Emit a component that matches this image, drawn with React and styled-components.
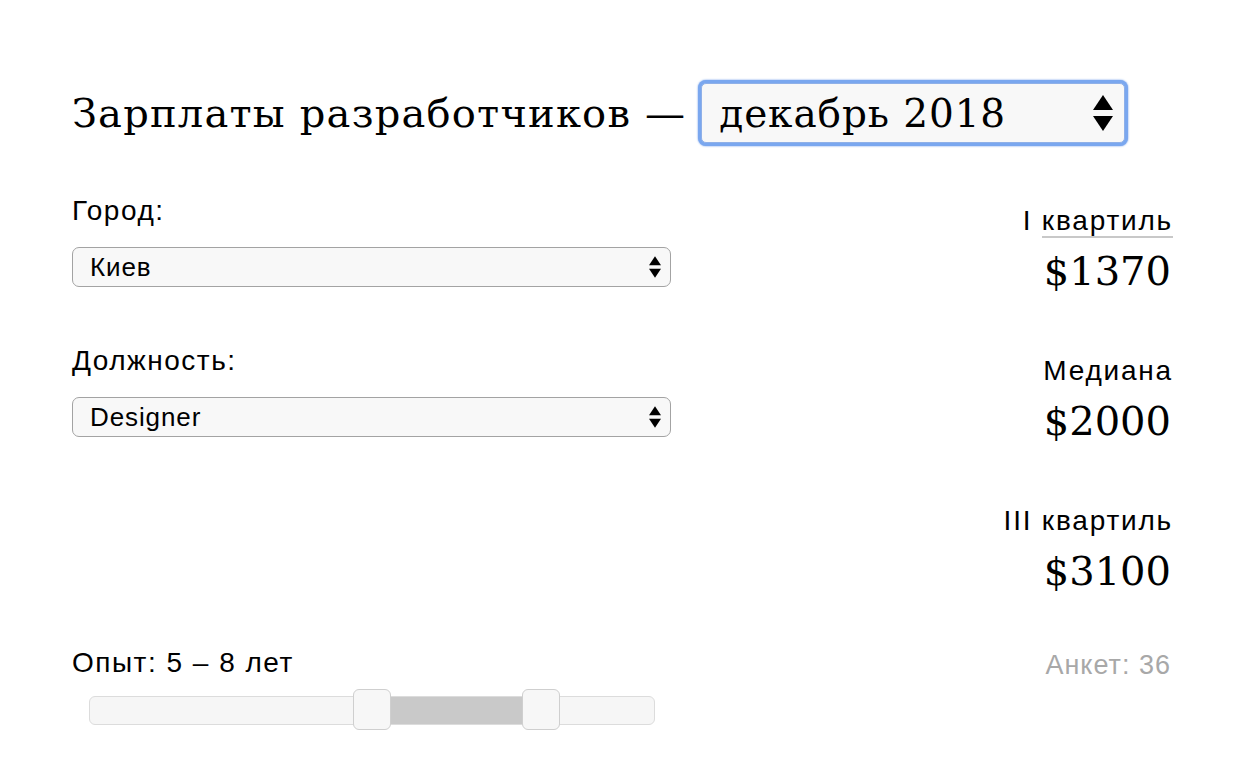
import React from "react";
import styled, { createGlobalStyle } from "styled-components";

const GlobalStyle = createGlobalStyle`
    html, body {
        margin: 0;
        padding: 0;
        background: #fff;
    }
    body {
        font-family: "Liberation Sans", Arial, sans-serif;
        color: #000;
    }
`;

const SERIF = `"DejaVu Serif", "Liberation Serif", Georgia, serif`;
const SANS = `"Liberation Sans", Arial, sans-serif`;

const Page = styled.div`
    width: 1234px;
    height: 774px;
    box-sizing: border-box;
    padding: 80px 63px 0 72px;
`;

const TitleRow = styled.div`
    display: flex;
    align-items: center;
    gap: 12px;
    height: 66px;
`;

const Title = styled.h1`
    margin: 0;
    font-family: ${SERIF};
    font-weight: normal;
    font-size: 40px;
    letter-spacing: 1.2px;
    white-space: nowrap;
`;

const FocusRing = styled.div`
    position: relative;
    padding: 3px;
    border-radius: 8px;
    background: #7aa7ef;
    box-shadow: 0 0 2px #5b8fe6;
`;

const SelectWrap = styled.div`
    position: relative;
    width: ${(p) => p.width}px;
`;

const Select = styled.select`
    appearance: none;
    -webkit-appearance: none;
    display: block;
    width: 100%;
    box-sizing: border-box;
    height: ${(p) => (p.big ? 60 : 40)}px;
    padding: 0 ${(p) => (p.big ? 17 : 17)}px;
    margin: 0;
    font-family: ${(p) => (p.big ? SERIF : SANS)};
    font-size: ${(p) => (p.big ? 39 : 26)}px;
    letter-spacing: ${(p) => (p.big ? 0.9 : 0.9)}px;
    color: #000;
    background: #f8f8f8;
    border: 1px solid ${(p) => (p.big ? "#8fb0e8" : "#a3a3a3")};
    border-radius: ${(p) => (p.big ? 5 : 7)}px;
    outline: none;
`;

const Arrows = styled.svg`
    position: absolute;
    top: 50%;
    right: ${(p) => p.right}px;
    transform: translateY(-50%);
    pointer-events: none;
`;

const Columns = styled.div`
    display: flex;
    justify-content: space-between;
    margin-top: 50px;
`;

const LeftCol = styled.div`
    width: 600px;
`;

const Field = styled.div`
    height: 150px;
`;

const Label = styled.div`
    font-size: 28px;
    line-height: 30px;
    letter-spacing: 1.5px;
    margin-bottom: ${(p) => (p.flush ? 0 : 21)}px;
`;

const RightCol = styled.div`
    display: flex;
    flex-direction: column;
    align-items: flex-end;
    padding-top: 10px;
`;

const Stat = styled.div`
    display: flex;
    flex-direction: column;
    align-items: flex-end;
    height: 150px;
`;

const StatLabel = styled.div`
    font-size: 28px;
    line-height: 30px;
    letter-spacing: 1.8px;
    margin-right: -2px;
`;

const Dotted = styled.span`
    border-bottom: 2px solid #c8c8c8;
`;

const StatValue = styled.div`
    font-family: ${SERIF};
    font-size: 40px;
    line-height: 48px;
    margin-top: 11px;
`;

const Bottom = styled.div`
    display: flex;
    justify-content: space-between;
    align-items: flex-start;
    margin-top: -8px;
`;

const Experience = styled.div`
    width: 600px;
`;

const Count = styled.div`
    font-size: 27px;
    line-height: 30px;
    letter-spacing: 1px;
    color: #a8a8a8;
    margin-top: 2px;
`;

const Track = styled.div`
    position: relative;
    margin: 18px 0 0 17px;
    width: 566px;
    height: 29px;
    box-sizing: border-box;
    background: #f6f6f6;
    border: 1px solid #dcdcdc;
    border-radius: 6px;
`;

const Range = styled.div`
    position: absolute;
    top: 0;
    bottom: 0;
    background: #c9c9c9;
`;

const Handle = styled.div`
    position: absolute;
    top: -8px;
    width: 38px;
    height: 41px;
    box-sizing: border-box;
    margin-left: -19px;
    background: #f7f7f7;
    border: 1px solid #cfcfcf;
    border-radius: 6px;
`;

function UpDown({ w, h, right }) {
    return (
        <Arrows width={w} height={h} viewBox="0 0 10 18" right={right}>
            <path d="M5 0 L10 7.5 L0 7.5 Z" fill="#000" />
            <path d="M5 18 L10 10.5 L0 10.5 Z" fill="#000" />
        </Arrows>
    );
}

function Slider({ min, max, from, to }) {
    const pct = (v) => ((v - min) / (max - min)) * 100;
    return (
        <Track>
            <Range style={{ left: `${pct(from)}%`, right: `${100 - pct(to)}%` }} />
            <Handle style={{ left: `${pct(from)}%` }} />
            <Handle style={{ left: `${pct(to)}%` }} />
        </Track>
    );
}

const stats = [
    { label: "I квартиль", abbr: true, value: "$1370" },
    { label: "Медиана", value: "$2000" },
    { label: "III квартиль", value: "$3100" },
];

export default function App() {
    return (
        <Page>
            <GlobalStyle />
            <TitleRow>
                <Title>Зарплаты разработчиков —</Title>
                <FocusRing>
                    <SelectWrap width={424}>
                        <Select big defaultValue="2018-12">
                            <option value="2018-12">декабрь 2018</option>
                        </Select>
                        <UpDown w={20} h={44} right={12} />
                    </SelectWrap>
                </FocusRing>
            </TitleRow>

            <Columns>
                <LeftCol>
                    <Field>
                        <Label>Город:</Label>
                        <SelectWrap width={599}>
                            <Select defaultValue="kiev">
                                <option value="kiev">Киев</option>
                            </Select>
                            <UpDown w={12} h={24} right={10} />
                        </SelectWrap>
                    </Field>
                    <Field>
                        <Label>Должность:</Label>
                        <SelectWrap width={599}>
                            <Select defaultValue="designer">
                                <option value="designer">Designer</option>
                            </Select>
                            <UpDown w={12} h={24} right={10} />
                        </SelectWrap>
                    </Field>
                </LeftCol>
                <RightCol>
                    {stats.map((s) => (
                        <Stat key={s.label}>
                            <StatLabel>
                                {s.abbr ? (
                                    <>
                                        I <Dotted>квартиль</Dotted>
                                    </>
                                ) : (
                                    s.label
                                )}
                            </StatLabel>
                            <StatValue>{s.value}</StatValue>
                        </Stat>
                    ))}
                </RightCol>
            </Columns>

            <Bottom>
                <Experience>
                    <Label flush>Опыт: 5 – 8 лет</Label>
                    <Slider min={0} max={10} from={5} to={8} />
                </Experience>
                <Count>Анкет: 36</Count>
            </Bottom>
        </Page>
    );
}
